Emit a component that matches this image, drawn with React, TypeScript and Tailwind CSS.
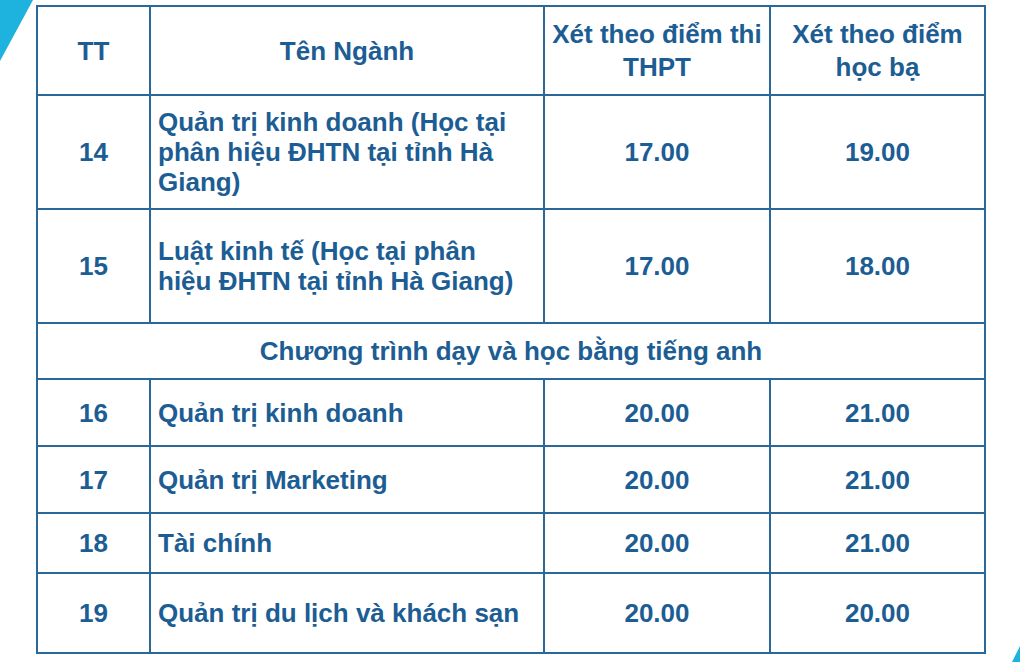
import React from "react";

type Row = { tt: string; name: React.ReactNode; thpt: string; hb: string; h: string };

const rowsA: Row[] = [
  {
    tt: "14",
    name: (
      <>
        Quản trị kinh doanh (Học tại
        <br />
        phân hiệu ĐHTN tại tỉnh Hà
        <br />
        Giang)
      </>
    ),
    thpt: "17.00",
    hb: "19.00",
    h: "h-[112px]",
  },
  {
    tt: "15",
    name: (
      <>
        Luật kinh tế (Học tại phân
        <br />
        hiệu ĐHTN tại tỉnh Hà Giang)
      </>
    ),
    thpt: "17.00",
    hb: "18.00",
    h: "h-[112px]",
  },
];

const rowsB: Row[] = [
  { tt: "16", name: "Quản trị kinh doanh", thpt: "20.00", hb: "21.00", h: "h-[65px]" },
  { tt: "17", name: "Quản trị Marketing", thpt: "20.00", hb: "21.00", h: "h-[65px]" },
  { tt: "18", name: "Tài chính", thpt: "20.00", hb: "21.00", h: "h-[58px]" },
  { tt: "19", name: "Quản trị du lịch và khách sạn", thpt: "20.00", hb: "20.00", h: "h-[78px]" },
];

function DataRow({ r }: { r: Row }) {
  return (
    <>
      <div className={`${r.h} bg-white flex items-center justify-center`}>{r.tt}</div>
      <div className={`${r.h} bg-white flex items-center pl-[7px]`}>
        <div>{r.name}</div>
      </div>
      <div className={`${r.h} bg-white flex items-center justify-center`}>{r.thpt}</div>
      <div className={`${r.h} bg-white flex items-center justify-center`}>{r.hb}</div>
    </>
  );
}

export default function App() {
  return (
    <div
      className="relative w-[1020px] h-[662px] overflow-hidden bg-white text-[#1c5d94] font-bold text-[26px] leading-[30px]"
      style={{ fontFamily: '"Liberation Sans", Arial, sans-serif' }}
    >
      <svg className="absolute left-0 top-0" width="40" height="64" viewBox="0 0 40 64">
        <polygon points="0,0 33,0 0,61" fill="#1db3de" />
      </svg>
      <svg className="absolute right-0 bottom-0" width="14" height="20" viewBox="0 0 14 20">
        <polygon points="14,4 14,20 6,20" fill="#1db3de" />
      </svg>
      <div className="ml-[36px] mt-[5px] w-[950px] bg-[#2a6899] p-[2px] grid grid-cols-[111px_392px_224px_213px] gap-[2px]">
        <div className="h-[87px] bg-white flex items-center justify-center">TT</div>
        <div className="h-[87px] bg-white flex items-center justify-center">Tên Ngành</div>
        <div className="h-[87px] bg-white flex items-center justify-center text-center leading-[33px]">
          <div>
            Xét theo điểm thi
            <br />
            THPT
          </div>
        </div>
        <div className="h-[87px] bg-white flex items-center justify-center text-center leading-[33px]">
          <div>
            Xét theo điểm
            <br />
            học bạ
          </div>
        </div>
        {rowsA.map((r) => (
          <DataRow key={r.tt} r={r} />
        ))}
        <div className="col-span-4 h-[54px] bg-white flex items-center justify-center">
          Chương trình dạy và học bằng tiếng anh
        </div>
        {rowsB.map((r) => (
          <DataRow key={r.tt} r={r} />
        ))}
      </div>
    </div>
  );
}
